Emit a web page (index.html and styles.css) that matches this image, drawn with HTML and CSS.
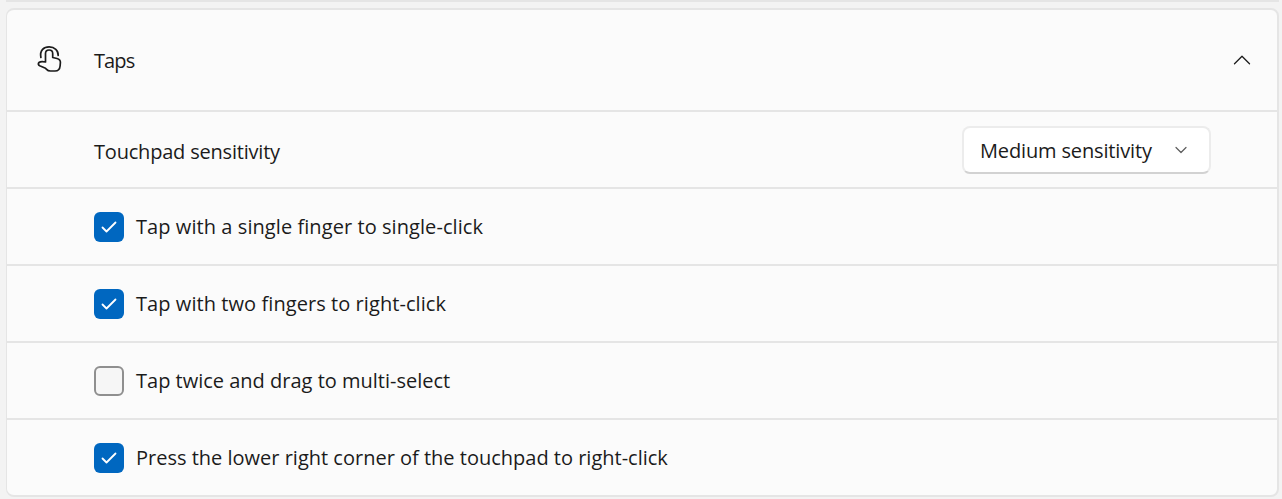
FILE: index.html
```html
<!DOCTYPE html>
<html lang="en">
<head>
<meta charset="utf-8">
<title>Taps</title>
<link rel="stylesheet" href="styles.css">
</head>
<body>
<div class="prev-card"></div>
<section class="card">
  <header class="head">
    <svg class="hand" width="28" height="30" viewBox="36 45 28 30" fill="none" stroke="#1b1b1b" stroke-width="1.7" stroke-linecap="round" stroke-linejoin="round">
      <path d="M40.900 57.500C39.500 50 44 46.900 49.200 46.900C54.500 46.900 58.500 50.500 58.200 55.500"/>
      <path d="M45.500 62V53.500C45.500 51.300 47 50 49.100 50C51.200 50 52.700 51.300 52.700 53.500V57.500L57 58.500C59.400 59.100 60.500 60.500 60.400 62.500L60.100 66C59.800 69.200 57.800 71 55 71H50.500C48.900 71 47.500 70.400 46.300 69.100L45.500 68.200L39.700 65.800C38.200 65.100 37.900 63.500 39 62.500C40.400 61.300 43 61.400 45.500 62Z"/>
    </svg>
    <span class="head-title">Taps</span>
    <svg class="chev-up" width="18" height="10" viewBox="0 0 18 10" fill="none" stroke="#1b1b1b" stroke-width="1.3" stroke-linecap="round" stroke-linejoin="round"><path d="M1.500 8.700 9 1.300l7.500 7.400"/></svg>
  </header>
  <div class="row row-select">
    <span class="label label-sens">Touchpad sensitivity</span>
    <div class="select">
      <span class="label label-value">Medium sensitivity</span>
      <svg width="12" height="8" viewBox="0 0 12 8" fill="none" stroke="#5c5c5c" stroke-width="1.200" stroke-linecap="round" stroke-linejoin="round"><path d="M1 1.500 6 6.500l5-5"/></svg>
    </div>
  </div>
  <div class="row">
    <span class="box on"><svg width="16" height="12" viewBox="0 0 16 12" fill="none" stroke="#fff" stroke-width="1.800" stroke-linecap="round" stroke-linejoin="round"><path d="M1.500 6.500 5.500 10.500 14.500 1.500"/></svg></span>
    <span class="label label-wide">Tap with a single finger to single-click</span>
  </div>
  <div class="row">
    <span class="box on"><svg width="16" height="12" viewBox="0 0 16 12" fill="none" stroke="#fff" stroke-width="1.800" stroke-linecap="round" stroke-linejoin="round"><path d="M1.500 6.500 5.500 10.500 14.500 1.500"/></svg></span>
    <span class="label label-wide">Tap with two fingers to right-click</span>
  </div>
  <div class="row">
    <span class="box off"></span>
    <span class="label">Tap twice and drag to multi-select</span>
  </div>
  <div class="row">
    <span class="box on"><svg width="16" height="12" viewBox="0 0 16 12" fill="none" stroke="#fff" stroke-width="1.800" stroke-linecap="round" stroke-linejoin="round"><path d="M1.500 6.500 5.500 10.500 14.500 1.500"/></svg></span>
    <span class="label">Press the lower right corner of the touchpad to right-click</span>
  </div>
</section>
</body>
</html>
```
FILE: styles.css
```css
* { box-sizing: border-box; }
html, body { margin: 0; height: 499px; overflow: hidden; }
body {
  background: #f3f3f3;
  font-family: "Open Sans", "Noto Sans", sans-serif;
  color: #1b1b1b;
  padding: 0 3px 0 6px;
}
.prev-card {
  height: 2px;
  background: #e5e5e5;
  margin: 0 0 6px;
}
.card {
  background: #fbfbfb;
  border: 2px solid #e5e5e5;
  border-left-width: 1px;
  border-radius: 8px;
  height: 489px;
  display: flex;
  flex-direction: column;
}
.head {
  height: 100px;
  display: flex;
  align-items: center;
  padding: 0 26px 0 29px;
}
.hand { flex: none; }
.head-title {
  font-size: 20px;
  letter-spacing: -0.9px;
  margin-left: 30px;
  flex: 1;
}
.row {
  height: 77px;
  border-top: 2px solid #e5e5e5;
  display: flex;
  align-items: center;
  padding-left: 87px;
  gap: 12px;
}
.row-select {
  justify-content: space-between;
  padding-right: 66px;
}
.label {
  font-size: 20px;
  white-space: nowrap;
}
.label-sens {
  letter-spacing: -0.2px;
  padding-top: 3px;
}
.label-value {
  letter-spacing: -0.15px;
  padding-top: 1px;
}
.label-wide { letter-spacing: 0.07px; }
.box {
  width: 30px;
  height: 30px;
  border-radius: 6px;
  display: flex;
  align-items: center;
  justify-content: center;
  flex: none;
}
.on { background: #0067c0; }
.off { background: #f6f6f6; border: 2px solid #8f8f8f; }
.select {
  width: 249px;
  height: 48px;
  background: #fff;
  border: 2px solid #ececec;
  border-bottom-color: #d2d2d2;
  border-radius: 8px;
  display: flex;
  align-items: center;
  justify-content: space-between;
  padding: 0 22px 0 16px;
}
```
